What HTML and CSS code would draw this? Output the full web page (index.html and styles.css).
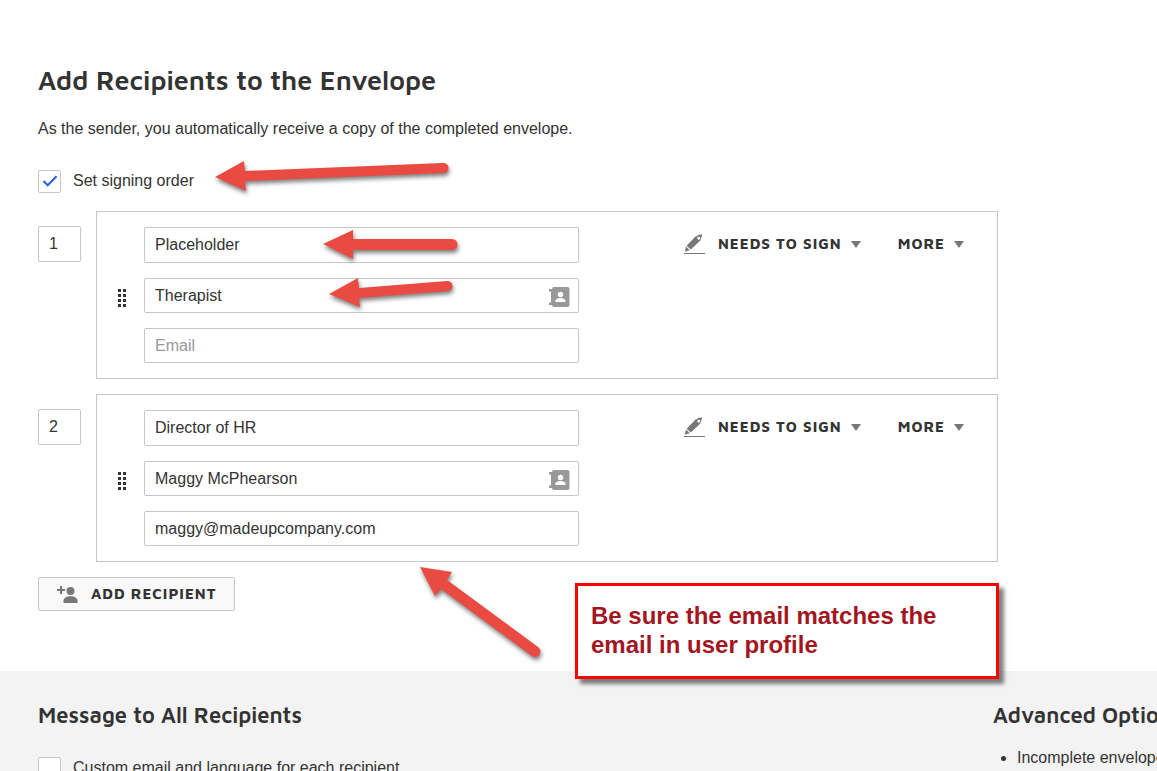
FILE: index.html
```html
<!DOCTYPE html>
<html lang="en">
<head>
    <meta charset="UTF-8">
    <meta name="viewport" content="width=device-width, initial-scale=1.0">
    <title>Add Recipients to the Envelope</title>
    <link rel="stylesheet" href="styles.css">
</head>
<body>

    <!-- shared icons -->
    <svg class="sprite" aria-hidden="true">
        <symbol id="icon-grip" viewBox="0 0 8 18">
            <path d="M0 0h3v3H0zM5 0h3v3H5zM0 5h3v3H0zM5 5h3v3H5zM0 10h3v3H0zM5 10h3v3H5zM0 15h3v3H0zM5 15h3v3H5z"/>
        </symbol>
        <symbol id="icon-contacts" viewBox="0 0 21 20">
            <path fill="#999" d="M5 0h13.500a2 2 0 0 1 2 2v16a2 2 0 0 1-2 2H5a2 2 0 0 1-2-2H0v-2.500h2V4.500H0V2h3a2 2 0 0 1 2-2z"/>
            <circle cx="11.500" cy="7.500" r="2.700" fill="#fff"/>
            <path fill="#fff" d="M6.500 15v-1.300c0-1.800 3-2.700 5-2.700s5 .9 5 2.700V15z"/>
        </symbol>
        <symbol id="icon-pen" viewBox="0 0 21 20">
            <path fill="#777" d="M.8 17.700L2 12.600l3.800 3.600zM2.600 11.700L11.500 2.600 13.300 2l1.500-1.500L16 .9l1.500-.9L18 1.500l-.3 1.300-.7 1.500-.6 2.200L6.800 15.500z"/>
            <path fill="#fff" d="M12.800 4l2.200 2.200 1.400-2.500-1.300-1.300z"/>
            <path fill="#777" d="M0 19h21v1H0z"/>
        </symbol>
        <symbol id="icon-caret" viewBox="0 0 10 7">
            <path fill="#777" d="M0 0h10L5 7z"/>
        </symbol>
    </svg>

    <main class="page">
        <section class="recipients">
            <h1>Add Recipients to the Envelope</h1>
            <p class="intro">As the sender, you automatically receive a copy of the completed envelope.</p>

            <label class="check">
                <span class="check-box">
                    <input type="checkbox" checked>
                    <svg width="16" height="12" viewBox="0 0 16 12"><path d="M1.500 6l4.200 4.300L14.500 1.300" fill="none" stroke="#2463e0" stroke-width="2"/></svg>
                </span>
                Set signing order
            </label>

            <div class="recipient">
                <input class="field order" type="text" value="1" aria-label="Signing order">
                <div class="card">
                    <svg class="grip" width="8" height="18"><use href="#icon-grip"/></svg>
                    <div class="fields">
                        <input class="field" type="text" value="Placeholder" aria-label="Role">
                        <div class="with-icon">
                            <input class="field" type="text" value="Therapist" aria-label="Name">
                            <button class="contacts" aria-label="Contacts"><svg width="21" height="20"><use href="#icon-contacts"/></svg></button>
                        </div>
                        <input class="field" type="email" placeholder="Email" aria-label="Email">
                    </div>
                    <div class="actions">
                        <button class="menu"><svg class="pen" width="21" height="20"><use href="#icon-pen"/></svg>NEEDS TO SIGN<svg class="caret" width="10" height="7"><use href="#icon-caret"/></svg></button>
                        <button class="menu">MORE<svg class="caret" width="10" height="7"><use href="#icon-caret"/></svg></button>
                    </div>
                </div>
            </div>

            <div class="recipient">
                <input class="field order" type="text" value="2" aria-label="Signing order">
                <div class="card">
                    <svg class="grip" width="8" height="18"><use href="#icon-grip"/></svg>
                    <div class="fields">
                        <input class="field" type="text" value="Director of HR" aria-label="Role">
                        <div class="with-icon">
                            <input class="field" type="text" value="Maggy McPhearson" aria-label="Name">
                            <button class="contacts" aria-label="Contacts"><svg width="21" height="20"><use href="#icon-contacts"/></svg></button>
                        </div>
                        <input class="field" type="email" value="maggy@madeupcompany.com" placeholder="Email" aria-label="Email">
                    </div>
                    <div class="actions">
                        <button class="menu"><svg class="pen" width="21" height="20"><use href="#icon-pen"/></svg>NEEDS TO SIGN<svg class="caret" width="10" height="7"><use href="#icon-caret"/></svg></button>
                        <button class="menu">MORE<svg class="caret" width="10" height="7"><use href="#icon-caret"/></svg></button>
                    </div>
                </div>
            </div>

            <button class="add">
                <svg width="21" height="17" viewBox="0 0 21 17" fill="#777">
                    <path d="M3 0h2v3h3v2H5v3H3V5H0V3h3z"/>
                    <circle cx="13.500" cy="5" r="4"/>
                    <path d="M6.500 17v-2.500c0-2.700 4-4.200 7-4.200s7 1.500 7 4.200V17z"/>
                </svg>
                ADD RECIPIENT
            </button>
        </section>

        <section class="message">
            <div class="message-main">
                <h2>Message to All Recipients</h2>
                <label class="check">
                    <span class="check-box"><input type="checkbox"></span>
                    Custom email and language for each recipient
                </label>
            </div>
            <div class="advanced">
                <h2>Advanced Options</h2>
                <ul>
                    <li>Incomplete envelopes</li>
                </ul>
            </div>
        </section>

        <!-- callouts over the form -->
        <svg class="arrows" width="600" height="680" fill="#e94b43" aria-hidden="true">
            <path d="M215 177L244 161L245 171L443 163A5 5 0 0 1 444 173L245 181L246 191Z"/>
            <path d="M323 244L353 230V239H452A5 5 0 0 1 452 250H353V259Z"/>
            <path d="M329 294L358 278L359 288L447 281A5 5 0 0 1 448 291L359 298L360 307Z"/>
            <path d="M420 567L452 572L447 580L538 647A5 5 0 0 1 532 656L441 589L435 596Z"/>
        </svg>
        <div class="note">Be sure the email matches the email in user profile</div>
    </main>

</body>
</html>
```
FILE: styles.css
```css
* {
    box-sizing: border-box;
}
body {
    margin: 0;
    height: 100vh;
    overflow: hidden;
    background-color: #fff;
    color: #333;
    font-family: "Liberation Sans", Arial, sans-serif;
    font-size: 16px;
    line-height: 24px;
}
h1, h2 {
    margin: 0;
    font-family: "Maven Pro", "Noto Sans", sans-serif;
    font-weight: 600;
}
h1 {
    font-size: 27px;
    line-height: 36px;
}
h2 {
    font-size: 22px;
    line-height: 28px;
}
button {
    padding: 0;
    border: none;
    background: none;
    color: #333;
    font-family: "Maven Pro", "Noto Sans", sans-serif;
    font-size: 15px;
    font-weight: 700;
    line-height: 20px;
    letter-spacing: 1px;
    cursor: pointer;
}
.sprite {
    display: none;
}
.page {
    position: relative;
}
.recipients {
    max-width: 998px;
    padding: 62px 0 60px 38px;
}
.intro {
    margin: 19px 0 28px;
}
.check {
    display: flex;
    align-items: center;
    gap: 12px;
}
.check-box {
    display: grid;
    place-items: center;
}
.check-box > * {
    grid-area: 1 / 1;
}
.check-box svg {
    pointer-events: none;
}
.check input {
    appearance: none;
    width: 23px;
    height: 23px;
    margin: 0;
    border: 1px solid #c6c6c6;
    border-radius: 2px;
    background-color: #fff;
}
.recipient {
    display: flex;
    align-items: flex-start;
    gap: 15px;
    margin-bottom: 15px;
}
.check + .recipient {
    margin-top: 18px;
}
.field {
    display: block;
    width: 100%;
    height: 35px;
    padding: 0 10px;
    border: 1px solid #c6c6c6;
    border-radius: 2px;
    background-color: #fff;
    color: #333;
    font: inherit;
}
.field::placeholder {
    color: #999;
}
.order {
    flex: none;
    width: 43px;
    height: 36px;
    margin-top: 15px;
}
.card {
    flex: 1;
    display: flex;
    align-items: flex-start;
    padding: 15px 33px 15px 21px;
    border: 1px solid #c6c6c6;
}
.grip {
    flex: none;
    align-self: center;
    margin: 6px 18px 0 0;
    fill: #333;
}
.fields {
    flex: 0 1 435px;
    display: flex;
    flex-direction: column;
    gap: 15px;
}
.fields > .field:first-child {
    height: 36px;
}
.with-icon {
    position: relative;
}
.contacts {
    position: absolute;
    top: 9px;
    right: 9px;
    height: 20px;
}
.contacts svg {
    display: block;
}
.actions {
    flex: 1;
    display: flex;
    justify-content: flex-end;
    gap: 37px;
}
.menu {
    display: flex;
    align-items: center;
    height: 34px;
    white-space: nowrap;
}
.pen {
    margin-right: 13px;
}
.caret {
    margin-left: 9px;
}
.add {
    display: flex;
    align-items: center;
    gap: 13px;
    height: 34px;
    padding: 0 18px;
    border: 1px solid #c6c6c6;
    border-radius: 2px;
    background-color: #f9f9f9;
}
.message {
    display: flex;
    padding: 30px 0 30px 38px;
    background-color: #f3f3f3;
    white-space: nowrap;
}
.message-main {
    flex: 0 0 955px;
}
.message .check {
    margin-top: 27px;
}
.advanced ul {
    margin: 17px 0 0;
    padding-left: 24px;
}
.arrows {
    position: absolute;
    top: 0;
    left: 0;
    pointer-events: none;
    filter: drop-shadow(1px 3px 2px rgba(0, 0, 0, 0.5));
}
.note {
    position: absolute;
    top: 583px;
    left: 575px;
    width: 424px;
    padding: 15px 40px 17px 13px;
    border: 3px solid #f00;
    background-color: #fff;
    box-shadow: 5px 5px 4px rgba(0, 0, 0, 0.5);
    color: #a3151f;
    font-size: 24px;
    font-weight: 700;
    line-height: 29px;
}
```
